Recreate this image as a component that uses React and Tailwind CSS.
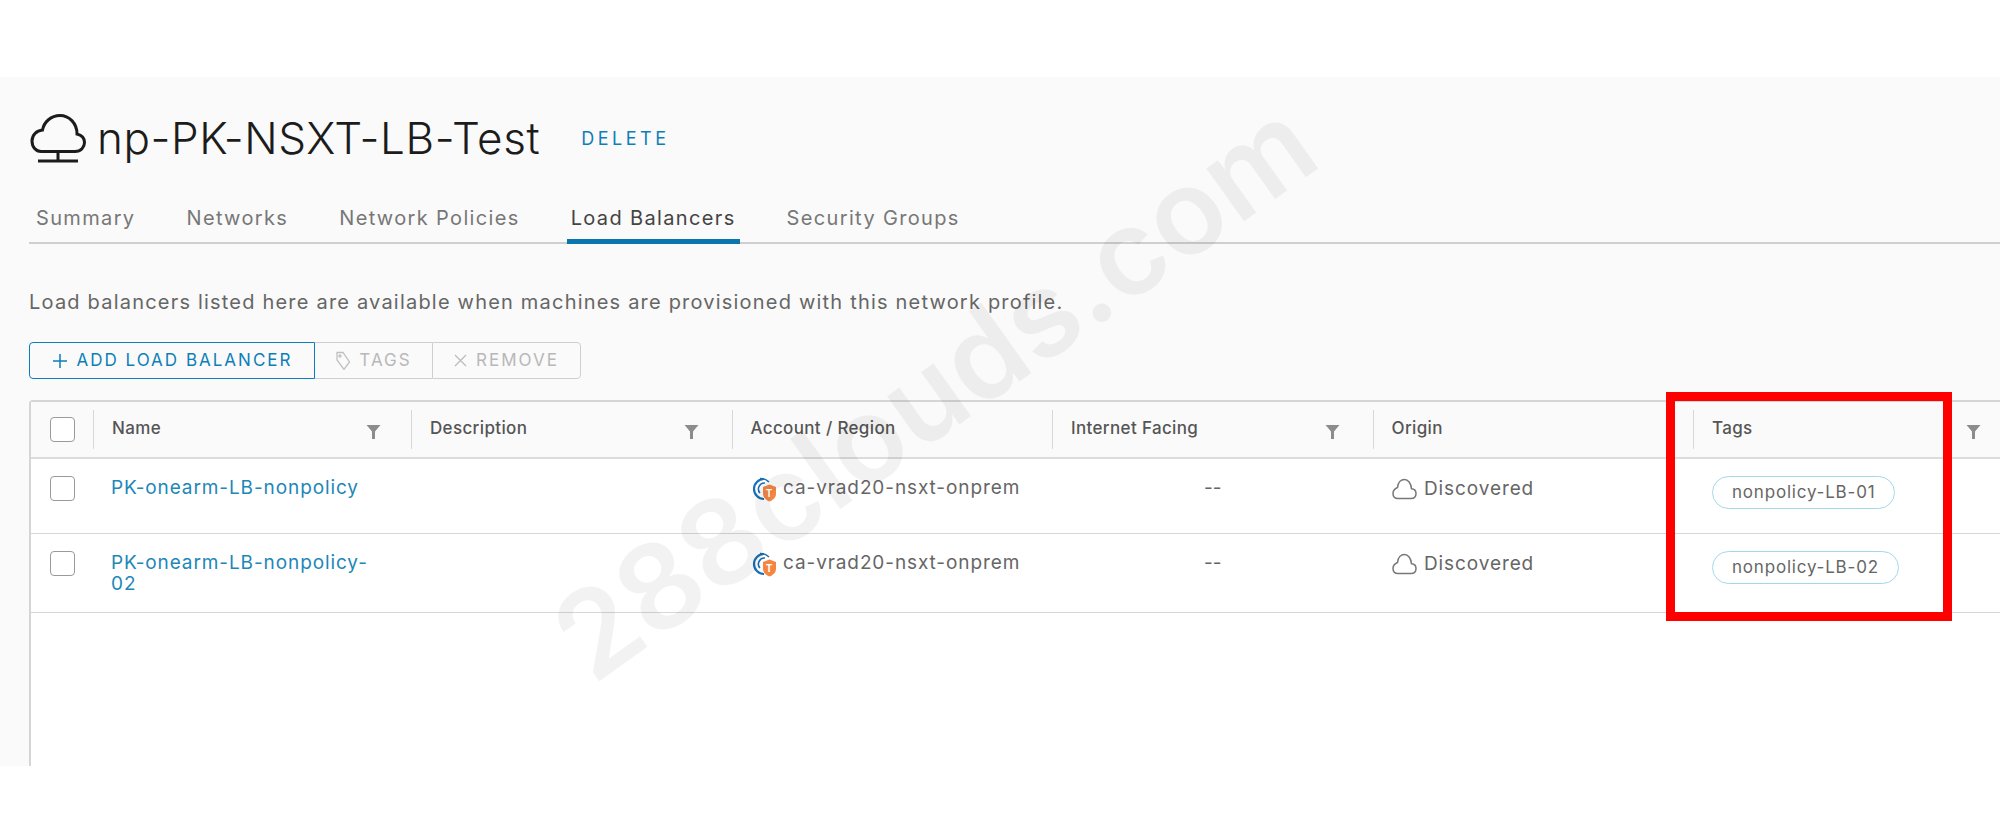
import React from "react";

const columns = [
  { label: "Name", filter: true, width: "w-[318px]" },
  { label: "Description", filter: true, width: "w-[320.5px]" },
  { label: "Account / Region", filter: false, width: "w-[320.5px]" },
  { label: "Internet Facing", filter: true, width: "w-[320.5px]" },
  { label: "Origin", filter: false, width: "w-[320.5px]" },
  { label: "Tags", filter: true, width: "w-[320.5px]" },
];

const rows = [
  { name: "PK-onearm-LB-nonpolicy", extra: null, tag: "nonpolicy-LB-01", height: "h-[75px]" },
  { name: "PK-onearm-LB-nonpolicy-", extra: "02", tag: "nonpolicy-LB-02", height: "h-[79px]" },
];

const tabs = ["Summary", "Networks", "Network Policies", "Load Balancers", "Security Groups"];

function CloudStand() {
  return (
    <svg width="56" height="50" viewBox="0 0 56 50" fill="none" stroke="#1c1c1c" strokeWidth="3" className="shrink-0">
      <path d="M11 38.5 H45 C51 38.5 54.5 34 54.5 29.5 C54.5 25 51 22 47 21 C47 10 39 2.5 30 2.5 C21 2.5 14 9 12.5 17 C6.5 17.5 2 22 2 28 C2 34 6 38.5 11 38.5 Z" />
      <path d="M28 39 V47" />
      <path d="M8 48 H48" />
    </svg>
  );
}

function SmallCloud() {
  return (
    <svg width="25" height="22" viewBox="0 0 25 22" fill="none" stroke="#777" strokeWidth="1.5" className="shrink-0">
      <path d="M6 20.5 H19 C22 20.5 24 18.5 24 15.5 C24 12.8 22 11 19.5 10.8 C19 5 16 1.5 12.5 1.5 C9 1.5 6 4.5 5.5 9.5 C3 10.5 1 12.5 1 15.5 C1 18.5 3 20.5 6 20.5 Z" />
    </svg>
  );
}

function Funnel() {
  return (
    <svg width="15" height="16" viewBox="0 0 15 16" className="shrink-0">
      <path d="M0.5 1 H14.5 L9 7.5 V15 H6 V7.5 Z" fill="#8c8c8c" />
    </svg>
  );
}

function AccountIcon() {
  return (
    <svg width="26" height="25" viewBox="0 0 26 25" fill="none" className="shrink-0">
      <path d="M13 2 A10 10 0 1 0 13 22" stroke="#1a6fb5" strokeWidth="2.2" />
      <path d="M14 6 A6 6 0 0 0 9 16" stroke="#1a6fb5" strokeWidth="1.6" />
      <path d="M9 1.5 A12 12 0 0 1 18 5" stroke="#1a6fb5" strokeWidth="1.6" />
      <path d="M12 10 L18.5 7.5 L25 10 V17 C25 20.5 21.5 23.5 18.5 24.5 C15.5 23.5 12 20.5 12 17 Z" fill="#f58642" />
      <text x="18.5" y="19.5" textAnchor="middle" fontSize="10" fontWeight="700" fill="#fff" fontFamily="Inter, sans-serif">T</text>
    </svg>
  );
}

function CheckBox() {
  return <div className="w-[25px] h-[25px] rounded-[4px] border-[1.5px] border-[#9a9a9a] bg-white shrink-0"></div>;
}

function Row({ row }) {
  return (
    <div className={`flex ${row.height} border-b-[1.5px] border-[#d7d7d7] bg-white text-[19px] leading-[21px] text-[#666]`}>
      <div className="w-[80px] pl-[19px] pt-[17px]">
        <CheckBox />
      </div>
      <div className="w-[320px] pt-[18px] text-[#1d87b8] tracking-[0.9px]">
        <div>{row.name}</div>
        {row.extra && <div>{row.extra}</div>}
      </div>
      <div className="w-[320px]"></div>
      <div className="w-[320px] pt-[18px] flex items-start gap-[6px] tracking-[0.9px]">
        <AccountIcon />
        <span>ca-vrad20-nsxt-onprem</span>
      </div>
      <div className="w-[321px] pt-[18px] pl-[133px]">--</div>
      <div className="w-[320px] pt-[19px] flex items-start gap-[7px] tracking-[0.9px]">
        <SmallCloud />
        <span>Discovered</span>
      </div>
      <div className="pt-[17px]">
        <div className="h-[33px] px-[19px] flex items-center rounded-full border-[1.5px] border-[#a3d8ea] text-[17px] text-[#666] tracking-[0.8px]">
          {row.tag}
        </div>
      </div>
    </div>
  );
}

export default function App() {
  return (
    <div className="relative w-[2000px] h-[822px] overflow-hidden bg-white font-['Inter',sans-serif]">
      <div className="h-[77px]"></div>

      <div className="h-[689px] bg-[#fafafa] pl-[29px] pt-[31px] flex flex-col">
        <div className="h-[60px] flex items-center">
          <div className="ml-[1px]">
            <CloudStand />
          </div>
          <h1 className="ml-[11px] text-[44px] font-light text-[#1c1c1c] tracking-[0.6px]">np-PK-NSXT-LB-Test</h1>
          <button className="ml-[41px] text-[18px] font-normal text-[#0d7fb8] tracking-[3.5px]">DELETE</button>
        </div>

        <div className="mt-[27px] h-[49px] flex items-end gap-[43px] pl-[3px] border-b-2 border-[#cfcfcf]">
          {tabs.map((t) => (
            <div
              key={t}
              className={
                t === "Load Balancers"
                  ? "h-[49px] px-[4px] -mb-[2px] pt-[8px] text-[20px] tracking-[1.35px] text-[#444] border-b-[5px] border-[#0b75ad]"
                  : "h-[49px] px-[4px] -mb-[2px] pt-[8px] text-[20px] tracking-[1.35px] text-[#777]"
              }
            >
              {t}
            </div>
          ))}
        </div>

        <p className="mt-[46px] h-[24px] leading-[24px] text-[20px] text-[#666] tracking-[1.2px]">
          Load balancers listed here are available when machines are provisioned with this network profile.
        </p>

        <div className="mt-[28px] h-[37px] flex">
          <button className="w-[286px] flex items-center justify-center gap-[9px] rounded-l-[4px] border-[1.5px] border-[#0b7fbd] text-[17px] text-[#0d7fb8] tracking-[2px]">
            <svg width="16" height="16" viewBox="0 0 16 16" stroke="#0d7fb8" strokeWidth="1.5">
              <path d="M8 1 V15 M1 8 H15" />
            </svg>
            ADD LOAD BALANCER
          </button>
          <button className="w-[117px] flex items-center justify-center gap-[8px] border-y-[1.5px] border-[#cfcfcf] text-[17px] text-[#b8b8b8] tracking-[2px]">
            <svg width="16" height="20" viewBox="0 0 16 20" fill="none" stroke="#c0c0c0" strokeWidth="1.3">
              <path d="M2 1.5 H8 L14.5 11 L9 18.5 L2 9 Z" />
              <circle cx="5" cy="5" r="1" />
            </svg>
            TAGS
          </button>
          <button className="w-[149px] flex items-center justify-center gap-[9px] rounded-r-[4px] border-[1.5px] border-[#cfcfcf] text-[17px] text-[#b8b8b8] tracking-[2px]">
            <svg width="13" height="13" viewBox="0 0 13 13" stroke="#bcbcbc" strokeWidth="1.3">
              <path d="M1 1 L12 12 M12 1 L1 12" />
            </svg>
            REMOVE
          </button>
        </div>

        <div className="mt-[21px] flex-1 w-[1985px] rounded-tl-[4px] border-l-2 border-t-2 border-[#d5d5d5] bg-white">
          <div className="h-[57px] flex items-center bg-[#fafafa] border-b-2 border-[#dcdcdc]">
            <div className="w-[62px] pl-[19px]">
              <CheckBox />
            </div>
            {columns.map((c) => (
              <div key={c.label} className={`relative ${c.width} h-[39px] shrink-0 flex items-center border-l-[1.5px] border-[#d8d8d8] pl-[18px]`}>
                <span className="text-[17px] font-medium text-[#555] tracking-[0.35px] -mt-[2px]">{c.label}</span>
                {c.filter && (
                  <span className="absolute left-[272px] top-[14px]">
                    <Funnel />
                  </span>
                )}
              </div>
            ))}
          </div>
          {rows.map((r) => (
            <Row key={r.tag} row={r} />
          ))}
        </div>
      </div>

      {/* watermark */}
      <div className="absolute left-[934px] top-[390px] -translate-x-1/2 -translate-y-1/2 -rotate-[35.5deg] text-[119px] font-semibold whitespace-nowrap text-black/5 pointer-events-none">
        288clouds.com
      </div>

      {/* red highlight drawn over the tags column */}
      <div className="absolute left-[1666px] top-[392px] w-[286px] h-[229px] border-[9px] border-[#ff0000] pointer-events-none"></div>
    </div>
  );
}
